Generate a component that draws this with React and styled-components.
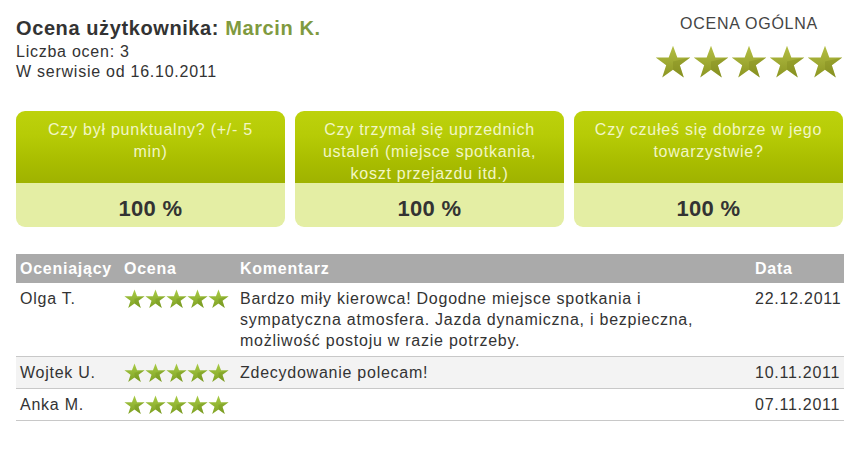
import React from 'react';
import styled, { createGlobalStyle } from 'styled-components';

const GlobalStyle = createGlobalStyle`
  body {
    margin: 0;
    background: #ffffff;
    font-family: "Liberation Sans", Arial, sans-serif;
    color: #333333;
  }
`;

const Page = styled.div`
  width: 860px;
  height: 450px;
  box-sizing: border-box;
  padding: 16px 16px 0 16px;
  letter-spacing: 0.75px;
`;

const Top = styled.div`
  display: flex;
  justify-content: space-between;
  align-items: flex-start;
  height: 95px;
`;

const User = styled.div`
  display: flex;
  flex-direction: column;
`;

const Title = styled.h1`
  margin: 0 0 2px 0;
  font-size: 20px;
  line-height: 24px;
  font-weight: bold;
  letter-spacing: 0.6px;
  color: #333333;
`;

const Name = styled.span`
  color: #7f9a3f;
`;

const Info = styled.div`
  font-size: 16px;
  line-height: 20px;
  color: #333333;
`;

const Overall = styled.div`
  display: flex;
  flex-direction: column;
  align-items: center;
  width: 190px;
`;

const OverallLabel = styled.div`
  font-size: 16px;
  line-height: 20px;
  color: #444444;
  margin-top: -2px;
`;

const StarRow = styled.div`
  display: flex;
  gap: ${p => p.$gap}px;
  margin-top: ${p => p.$top || 0}px;
`;

const Cards = styled.div`
  display: grid;
  grid-template-columns: repeat(3, 1fr);
  gap: 10px;
  margin-right: 1px;
`;

const Card = styled.div`
  border-radius: 9px;
  overflow: hidden;
  display: flex;
  flex-direction: column;
`;

const Question = styled.div`
  height: 72px;
  box-sizing: border-box;
  padding: 8px 14px 0 14px;
  text-align: center;
  font-size: 16px;
  line-height: 22px;
  color: #f2f6c4;
  background: linear-gradient(to bottom, #bdd20c 0%, #b6cb06 35%, #a9bd00 70%, #9fb200 100%);
`;

const Score = styled.div`
  height: 44px;
  box-sizing: border-box;
  padding-top: 7px;
  display: flex;
  align-items: center;
  justify-content: center;
  font-size: 22px;
  font-weight: bold;
  letter-spacing: 0.3px;
  color: #333333;
  background: #e4eea4;
`;

const Table = styled.table`
  margin-top: 27px;
  width: 828px;
  table-layout: fixed;
  border-collapse: collapse;
  font-size: 16px;
`;

const Th = styled.th`
  background: #aaaaaa;
  color: #ffffff;
  font-weight: bold;
  text-align: left;
  height: 29px;
  padding: 0 0 0 ${p => p.$pad || 4}px;
  width: ${p => (p.$w ? `${p.$w}px` : 'auto')};
`;

const Tr = styled.tr`
  background: ${p => (p.$alt ? '#f3f3f3' : '#ffffff')};
  border-bottom: 1px solid #c8c8c8;
`;

const Td = styled.td`
  vertical-align: top;
  padding: 5px 4px 5px ${p => p.$pad || 4}px;
  line-height: 21px;
  color: #333333;
`;

const StarCell = styled(Td)`
  padding-top: 6px;
`;

const Comment = styled.div`
  max-width: 470px;
`;

const StarSvg = ({ size, variant, id }) => {
  const top = variant === 'big' ? '#b4bf45' : '#a9cc46';
  const bot = variant === 'big' ? '#8c9622' : '#7fa224';
  const dark = variant === 'big' ? '#7d871c' : '#6f8f1c';
  return (
    <svg width={size} height={size * 0.92} viewBox="0 0 100 92">
      <defs>
        <linearGradient id={id} x1="0" y1="0" x2="0" y2="1">
          <stop offset="0%" stopColor={top} />
          <stop offset="100%" stopColor={bot} />
        </linearGradient>
      </defs>
      <polygon
        points="50,2 62,35 98,35 69,56 80,90 50,69 20,90 31,56 2,35 38,35"
        fill={`url(#${id})`}
      />
      <polygon points="50,46 98,35 69,56 80,90 50,69" fill={dark} opacity="0.35" />
    </svg>
  );
};

const Stars = ({ size, gap, variant, prefix, top }) => (
  <StarRow $gap={gap} $top={top}>
    {[0, 1, 2, 3, 4].map(i => (
      <StarSvg key={i} size={size} variant={variant} id={`${prefix}-${i}`} />
    ))}
  </StarRow>
);

const questions = [
  { q: 'Czy był punktualny? (+/- 5 min)', v: '100 %' },
  { q: 'Czy trzymał się uprzednich ustaleń (miejsce spotkania, koszt przejazdu itd.)', v: '100 %' },
  { q: 'Czy czułeś się dobrze w jego towarzystwie?', v: '100 %' },
];

const reviews = [
  {
    who: 'Olga T.',
    text: 'Bardzo miły kierowca! Dogodne miejsce spotkania i sympatyczna atmosfera. Jazda dynamiczna, i bezpieczna, możliwość postoju w razie potrzeby.',
    date: '22.12.2011',
  },
  { who: 'Wojtek U.', text: 'Zdecydowanie polecam!', date: '10.11.2011' },
  { who: 'Anka M.', text: '', date: '07.11.2011' },
];

export default function App() {
  return (
    <>
      <GlobalStyle />
      <Page>
        <Top>
          <User>
            <Title>
              Ocena użytkownika: <Name>Marcin K.</Name>
            </Title>
            <Info>Liczba ocen: 3</Info>
            <Info>W serwisie od 16.10.2011</Info>
          </User>
          <Overall>
            <OverallLabel>OCENA OGÓLNA</OverallLabel>
            <Stars size={36} gap={2} variant="big" prefix="big" top={11} />
          </Overall>
        </Top>
        <Cards>
          {questions.map((c, i) => (
            <Card key={i}>
              <Question>{c.q}</Question>
              <Score>{c.v}</Score>
            </Card>
          ))}
        </Cards>
        <Table>
          <thead>
            <tr>
              <Th $w={100}>Oceniający</Th>
              <Th $w={112}>Ocena</Th>
              <Th>Komentarz</Th>
              <Th $w={89} $pad={5}>Data</Th>
            </tr>
          </thead>
          <tbody>
            {reviews.map((r, i) => (
              <Tr key={i} $alt={i === 1}>
                <Td>{r.who}</Td>
                <StarCell>
                  <Stars size={21} gap={0} variant="small" prefix={`row${i}`} />
                </StarCell>
                <Td>
                  <Comment>{r.text}</Comment>
                </Td>
                <Td $pad={5}>{r.date}</Td>
              </Tr>
            ))}
          </tbody>
        </Table>
      </Page>
    </>
  );
}
